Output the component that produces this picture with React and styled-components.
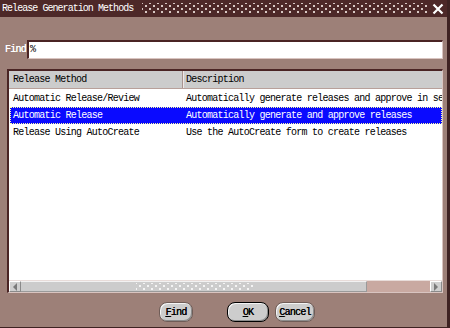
import styled, {createGlobalStyle} from 'styled-components'

const Global = createGlobalStyle`
    html, body {
        margin: 0;
        padding: 0;
        background: #9d8078;
    }
    * {
        box-sizing: border-box;
    }
`

const rows = [
    {method: 'Automatic Release/Review', description: 'Automatically generate releases and approve in sep'},
    {method: 'Automatic Release', description: 'Automatically generate and approve releases', selected: true},
    {method: 'Release Using AutoCreate', description: 'Use the AutoCreate form to create releases'},
]

const App = () => {
    return (
        <>
            <Global />
            <Window>
                <TitleBar>
                    <TitleText>Release Generation Methods</TitleText>
                    <Grip />
                    <CloseButton>
                        <svg width="12" height="12" viewBox="0 0 12 12">
                            <path d="M1.5 1.5 L10.5 10.5 M10.5 1.5 L1.5 10.5" stroke="#fff" strokeWidth="2.2" />
                        </svg>
                    </CloseButton>
                </TitleBar>

                <Body>
                    <FindRow>
                        <Label>Find</Label>
                        <Input>%</Input>
                    </FindRow>

                    <Panel>
                        <Grid>
                            <HeaderRow>
                                <HeaderCell $width={175}>Release Method</HeaderCell>
                                <HeaderCell $last>Description</HeaderCell>
                            </HeaderRow>
                            {rows.map((row, index) => (
                                <Row key={index} $selected={row.selected}>
                                    <Cell $width={175}>{row.method}</Cell>
                                    <Cell $desc>{row.description}</Cell>
                                </Row>
                            ))}
                        </Grid>
                        <ScrollBar>
                            <Arrow>
                                <svg width="6" height="8" viewBox="0 0 6 8"><path d="M5 0 L1 4 L5 8 Z" fill="#7a7a7a" /></svg>
                            </Arrow>
                            <Thumb><ThumbGrip /></Thumb>
                            <Track />
                            <Arrow>
                                <svg width="6" height="8" viewBox="0 0 6 8"><path d="M1 0 L5 4 L1 8 Z" fill="#7a7a7a" /></svg>
                            </Arrow>
                        </ScrollBar>
                    </Panel>

                    <Buttons>
                        <Button $width={34}><u>F</u>ind</Button>
                        <Spacer />
                        <Button $width={42} $default><u>O</u>K</Button>
                        <Button $width={40}><u>C</u>ancel</Button>
                    </Buttons>
                </Body>
            </Window>
        </>
    )
}

export default App

const mono = `
    font-family: "Liberation Mono", "DejaVu Sans Mono", monospace;
    font-size: 10px;
    letter-spacing: -0.75px;
`

const Window = styled.div`
    width: 450px;
    height: 328px;
    background: #9d8078;
    border-right: 3px solid #3e2222;
    border-bottom: 1px solid #3e2222;
    display: flex;
    flex-direction: column;
    overflow: hidden;
    ${mono}
`

const TitleBar = styled.div`
    height: 17px;
    background: #4d2828;
    display: flex;
    align-items: center;
    padding-left: 2px;
    flex-shrink: 0;
`

const TitleText = styled.span`
    color: #fff;
    letter-spacing: -0.95px;
    white-space: nowrap;
`

const Grip = styled.div`
    flex: 1;
    height: 11px;
    margin-left: 9px;
    background-image:
        radial-gradient(circle, #d8c8c4 0.8px, transparent 1px),
        radial-gradient(circle, #d8c8c4 0.8px, transparent 1px);
    background-size: 8px 6px;
    background-position: 0 0, 4px 3px;
`

const CloseButton = styled.div`
    width: 18px;
    display: flex;
    justify-content: center;
`

const Body = styled.div`
    flex: 1;
    display: flex;
    flex-direction: column;
    padding: 23px 4px 0 7px;
`

const FindRow = styled.div`
    display: flex;
    align-items: center;
    margin-left: -3px;
`

const Label = styled.span`
    color: #fff;
    width: 23px;
    padding-left: 1px;
    text-shadow: 0 0 0 #fff;
`

const Input = styled.div`
    flex: 1;
    height: 19px;
    background: #fff;
    border-top: 2px solid #4a2424;
    border-left: 2px solid #4a2424;
    border-bottom: 1px solid #d9c4c0;
    border-right: 1px solid #d9c4c0;
    padding-left: 1px;
    line-height: 16px;
    color: #000;
`

const Panel = styled.div`
    margin-top: 10px;
    height: 224px;
    background: #fff;
    border-top: 2px solid #4a2424;
    border-left: 2px solid #4a2424;
    border-bottom: 1px solid #d9c4c0;
    border-right: 1px solid #d9c4c0;
    display: flex;
    flex-direction: column;
    overflow: hidden;
`

const Grid = styled.div`
    flex: 1;
    overflow: hidden;
`

const HeaderRow = styled.div`
    display: flex;
    height: 18px;
    background: #cccccc;
    border-bottom: 1px solid #b8a09a;
    margin-bottom: 1px;
`

const HeaderCell = styled.div`
    ${({$width}) => $width ? `width: ${$width}px; flex-shrink: 0;` : 'flex: 1;'}
    border-right: ${({$last}) => $last ? 'none' : '1px solid #f0e8e6'};
    box-shadow: ${({$last}) => $last ? 'none' : 'inset -1px 0 0 #a89490'};
    padding-left: ${({$last}) => $last ? '2px' : '4px'};
    line-height: 17px;
    color: #000;
    white-space: nowrap;
`

const Row = styled.div`
    display: flex;
    height: 17px;
    margin: 0 0 0 1px;
    color: ${({$selected}) => $selected ? '#fff' : '#000'};
    background: ${({$selected}) => $selected ? '#0a0aff' : 'transparent'};
    outline: ${({$selected}) => $selected ? '1px dotted #ffffa0' : 'none'};
    outline-offset: -1px;
`

const Cell = styled.div`
    ${({$width}) => $width ? `width: ${$width}px; flex-shrink: 0;` : 'flex: 1;'}
    padding-left: ${({$desc}) => $desc ? '1px' : '3px'};
    line-height: 18px;
    white-space: nowrap;
    overflow: hidden;
`

const ScrollBar = styled.div`
    height: 12px;
    display: flex;
    background: #c9a9a1;
    border-top: 1px solid #e8dcd9;
    flex-shrink: 0;
`

const Arrow = styled.div`
    width: 12px;
    background: #cfcfcf;
    border: 1px solid #fff;
    border-right-color: #8a8a8a;
    border-bottom-color: #8a8a8a;
    display: flex;
    align-items: center;
    justify-content: center;
`

const Thumb = styled.div`
    width: 346px;
    background: #cccccc;
    border-top: 1px solid #f2f2f2;
    border-bottom: 1px solid #9a9a9a;
    border-right: 1px solid #9a9a9a;
    display: flex;
    align-items: center;
    padding-left: 115px;
`

const ThumbGrip = styled.div`
    width: 117px;
    height: 8px;
    background-image:
        radial-gradient(circle, #f4f4f4 0.8px, transparent 1px),
        radial-gradient(circle, #f4f4f4 0.8px, transparent 1px);
    background-size: 8px 6px;
    background-position: 0 0, 4px 3px;
`

const Track = styled.div`
    flex: 1;
`

const Buttons = styled.div`
    display: flex;
    align-items: center;
    margin-top: 9px;
    padding-left: 152px;
    gap: 6px;
`

const Spacer = styled.div`
    width: 22px;
`

const Button = styled.div`
    width: ${({$width}) => $width}px;
    height: 20px;
    border-radius: 8px;
    background: #cdcdcd;
    border: 1px solid ${({$default}) => $default ? '#000' : '#6f5c57'};
    box-shadow: inset 1px 1px 0 #f4f4f4, inset -1px -1px 0 #8c8c8c;
    display: flex;
    align-items: center;
    justify-content: center;
    color: #000;
    text-shadow: 0.3px 0 0 #000;
    & u {
        text-underline-offset: 1px;
    }
`
